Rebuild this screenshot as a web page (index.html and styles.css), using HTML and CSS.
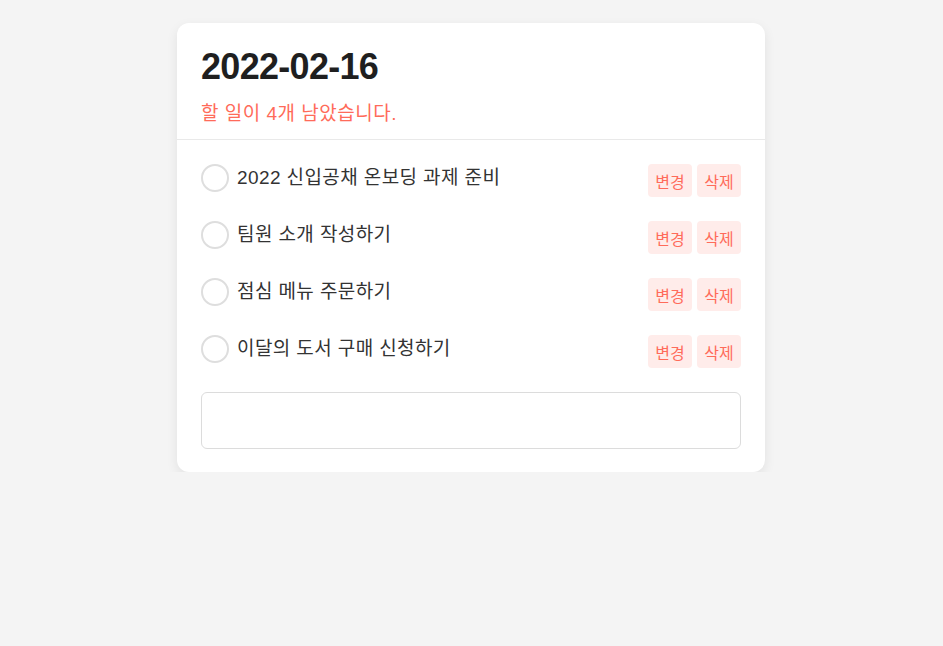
FILE: index.html
```html
<!DOCTYPE html>
<html lang="ko">
<head>
<meta charset="utf-8">
<title>Todo</title>
<link rel="stylesheet" href="styles.css">
</head>
<body>
<div class="card">
  <header class="head">
    <h1 class="date">2022-02-16</h1>
    <p class="remain">할 일이 4개 남았습니다.</p>
  </header>
  <ul class="list">
    <li class="item">
      <span class="check"></span>
      <span class="text">2022 신입공채 온보딩 과제 준비</span>
      <div class="actions"><button class="btn">변경</button><button class="btn">삭제</button></div>
    </li>
    <li class="item">
      <span class="check"></span>
      <span class="text">팀원 소개 작성하기</span>
      <div class="actions"><button class="btn">변경</button><button class="btn">삭제</button></div>
    </li>
    <li class="item">
      <span class="check"></span>
      <span class="text">점심 메뉴 주문하기</span>
      <div class="actions"><button class="btn">변경</button><button class="btn">삭제</button></div>
    </li>
    <li class="item">
      <span class="check"></span>
      <span class="text">이달의 도서 구매 신청하기</span>
      <div class="actions"><button class="btn">변경</button><button class="btn">삭제</button></div>
    </li>
  </ul>
  <div class="form"><input class="input" type="text"></div>
</div>
</body>
</html>
```
FILE: styles.css
```css
* { box-sizing: border-box; }
html, body { margin: 0; padding: 0; }
body {
  background: #f4f4f4;
  font-family: "Liberation Sans", "Noto Sans CJK KR", sans-serif;
  color: #222;
  padding-top: 23px;
}
.card {
  width: 588px;
  margin: 0 0 0 177px;
  background: #fff;
  border-radius: 12px;
  box-shadow: 0 4px 12px rgba(0, 0, 0, 0.08);
}
.head {
  padding: 24px 24px 12px;
  border-bottom: 1px solid #e9e9e9;
}
.date {
  margin: 0;
  font-size: 36px;
  line-height: 40px;
  font-weight: 700;
  letter-spacing: -0.7px;
  color: #1f1f1f;
}
.remain {
  margin: 14px 0 0;
  font-size: 19px;
  line-height: 26px;
  letter-spacing: 0.5px;
  color: #ff6b5a;
}
.list {
  list-style: none;
  margin: 0;
  padding: 12px 24px 12px;
}
.item {
  display: flex;
  align-items: flex-start;
  padding: 12px 0;
}
.check {
  width: 28px;
  height: 28px;
  border: 2px solid #dedede;
  border-radius: 50%;
  flex-shrink: 0;
}
.text {
  flex: 1;
  margin-left: 8px;
  font-size: 19px;
  line-height: 28px;
  letter-spacing: 0.4px;
  color: #333;
}
.actions {
  display: flex;
  gap: 5px;
}
.btn {
  height: 33px;
  width: 44px;
  padding: 0;
  border: none;
  border-radius: 4px;
  background: #ffecea;
  color: #ff6b5a;
  font-family: "Liberation Sans", "Noto Sans CJK KR", sans-serif;
  font-size: 16px;
}
.form {
  padding: 0 24px 23px;
}
.input {
  display: block;
  width: 100%;
  height: 57px;
  border: 1px solid #dcdcdc;
  border-radius: 6px;
  background: #fff;
  outline: none;
}
```
